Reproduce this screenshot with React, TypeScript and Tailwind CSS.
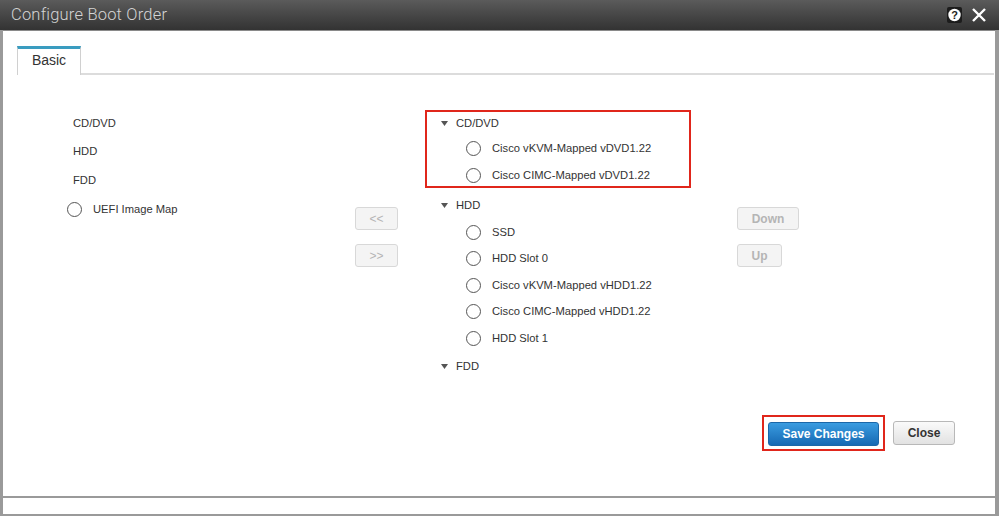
import React from 'react';

const font = { fontFamily: '"Liberation Sans", Arial, sans-serif' };

function Radio() {
  return <span className="block h-[15px] w-[15px] shrink-0 rounded-full border border-[#555] bg-white" />;
}

function Caret() {
  return (
    <svg width="7" height="5" viewBox="0 0 7 5" className="shrink-0">
      <path d="M0 0h7L3.5 5z" fill="#555" />
    </svg>
  );
}

function GhostButton({ label, className }: { label: string; className: string }) {
  return (
    <button
      disabled
      className={`flex items-center justify-center rounded-[3px] border border-[#d8d8d8] bg-[#f4f4f4] text-[12px] text-[#b5b5b5] ${className}`}
    >
      {label}
    </button>
  );
}

const hddItems = ['SSD', 'HDD Slot 0', 'Cisco vKVM-Mapped vHDD1.22', 'Cisco CIMC-Mapped vHDD1.22', 'HDD Slot 1'];

export default function App() {
  return (
    <div className="flex h-[516px] w-[999px] flex-col bg-[#9a9a9a] text-[#333]" style={font}>
      {/* title bar */}
      <div className="flex h-[30px] shrink-0 items-center justify-between bg-gradient-to-b from-[#5b5b5b] to-[#333] pl-[11px] pr-[13px]">
        <span className="text-[16.5px] font-light tracking-[0.2px] text-[#d4d4d4]" style={{ fontFamily: 'Roboto, "Liberation Sans", sans-serif' }}>
          Configure Boot Order
        </span>
        <div className="flex items-center gap-[10px]">
          <svg width="15" height="16" viewBox="0 0 15 16">
            <rect x="0" y="0" width="15" height="16" rx="2" fill="#1c1c1c" />
            <circle cx="7.5" cy="8" r="6.2" fill="#fff" />
            <text x="7.5" y="12" textAnchor="middle" fontSize="11" fontWeight="bold" fill="#1c1c1c" fontFamily="Liberation Sans, Arial, sans-serif">?</text>
          </svg>
          <svg width="14" height="14" viewBox="0 0 14 14">
            <path d="M1 1l12 12M13 1L1 13" stroke="#fff" strokeWidth="2.4" />
          </svg>
        </div>
      </div>

      {/* body */}
      <div className="ml-[3px] mr-[4px] flex h-[466px] shrink-0 flex-col border-t border-[#8a8a8a] bg-white">
        {/* tabs */}
        <div className="mt-[15px] flex pl-[14px] pr-[1px]">
          <div className="flex h-[29px] w-[64px] items-center justify-center border-x border-t-[3px] border-x-[#d0d0d0] border-t-[#3a9cc0] bg-white pb-[3px] text-[14px] text-[#333]">
            Basic
          </div>
          <div className="flex-1 border-b-2 border-[#dcdcdc]" />
        </div>

        {/* main */}
        <div className="mt-[35px] flex pl-[64px] text-[11.2px]">
          <div className="w-[288px]">
            <div className="flex h-[27px] items-center pl-[6px]">CD/DVD</div>
            <div className="flex h-[29px] items-center pl-[6px]">HDD</div>
            <div className="flex h-[28px] items-center pl-[6px]">FDD</div>
            <div className="flex h-[30px] items-center gap-[11px]">
              <Radio />
              <span>UEFI Image Map</span>
            </div>
          </div>

          <div className="w-[70px] pt-[97px]">
            <GhostButton label="<<" className="h-[23px] w-[43px]" />
            <GhostButton label=">>" className="mt-[14px] h-[23px] w-[43px]" />
          </div>

          <div className="w-[312px]">
            <div className="flex h-[78px] w-[266px] flex-col border-2 border-[#e0261b]">
              <div className="flex h-[23px] shrink-0 items-center gap-[8px] pl-[14px]">
                <Caret />
                <span>CD/DVD</span>
              </div>
              <div className="flex h-[27px] shrink-0 items-center gap-[11px] pl-[39px]">
                <Radio />
                <span>Cisco vKVM-Mapped vDVD1.22</span>
              </div>
              <div className="flex h-[26px] shrink-0 items-center gap-[11px] pl-[39px]">
                <Radio />
                <span>Cisco CIMC-Mapped vDVD1.22</span>
              </div>
            </div>
            <div className="mt-[3px] flex h-[28px] items-center gap-[8px] pl-[16px]">
              <Caret />
              <span>HDD</span>
            </div>
            {hddItems.map((item) => (
              <div key={item} className="flex h-[26.5px] items-center gap-[11px] pl-[41px]">
                <Radio />
                <span>{item}</span>
              </div>
            ))}
            <div className="flex h-[30px] items-center gap-[8px] pl-[16px]">
              <Caret />
              <span>FDD</span>
            </div>
          </div>

          <div className="pt-[97px]">
            <GhostButton label="Down" className="h-[23px] w-[62px] font-bold" />
            <GhostButton label="Up" className="mt-[14px] h-[23px] w-[45px] font-bold" />
          </div>
        </div>

        {/* footer buttons */}
        <div className="mt-[33px] flex items-center justify-end gap-[8px] pr-[40px]">
          <div className="border-2 border-[#e0261b] px-[4px] pb-[3px] pt-[5px]">
            <button className="flex h-[24px] w-[111px] items-center justify-center rounded-[3px] border border-[#1b67a8] bg-gradient-to-b from-[#3a9ce0] to-[#1669b3] text-[12px] font-bold text-white">
              Save Changes
            </button>
          </div>
          <button className="flex h-[24px] w-[62px] items-center justify-center rounded-[3px] border border-[#b8b8b8] bg-gradient-to-b from-[#fafafa] to-[#e2e2e2] text-[12px] font-bold text-[#333]">
            Close
          </button>
        </div>
      </div>

      {/* status strip */}
      <div className="ml-[3px] mr-[4px] mt-[2px] h-[16px] shrink-0 bg-white" />
    </div>
  );
}
